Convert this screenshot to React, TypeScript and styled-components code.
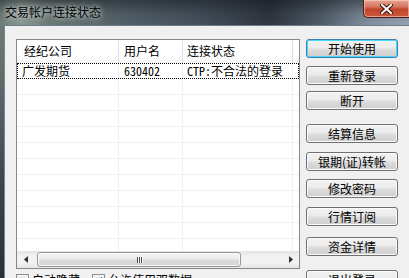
import React from "react";
import styled, { createGlobalStyle } from "styled-components";

const GlobalStyle = createGlobalStyle`
  html, body {
    margin: 0;
    padding: 0;
    width: 409px;
    height: 278px;
    overflow: hidden;
    background: #f0f0f0;
  }
`;

const UI_FONT = `"Noto Sans CJK SC", "Noto Sans", sans-serif`;
const LIST_FONT = `"Noto Sans Mono CJK SC", "Noto Sans CJK SC", "Liberation Mono", monospace`;

const Window = styled.div`
    width: 409px;
    height: 278px;
    display: flex;
    flex-direction: column;
    overflow: hidden;
    font-family: ${UI_FONT};
    font-size: 12px;
    color: #000;
`;

const TitleBar = styled.div`
    height: 25px;
    flex: none;
    display: flex;
    align-items: flex-start;
    background:
      linear-gradient(180deg, rgba(10, 14, 18, 0.45) 0%, rgba(10, 14, 18, 0.1) 55%, rgba(0, 0, 0, 0) 100%),
      linear-gradient(90deg, #6f7e79 0%, #8a9993 5%, #65736f 14%, #52606a 32%, #434e5a 50%, #2f3640 66%, #4f5b68 78%, #8290a0 90%, #94a2b2 100%);
`;

const Title = styled.span`
    margin: 4px 0 0 5px;
    font-size: 12px;
    line-height: 16px;
    color: #000;
    text-shadow:
      0 0 4px rgba(230, 236, 240, 0.9),
      0 0 8px rgba(220, 228, 232, 0.7);
`;

const CloseButton = styled.div`
    margin-left: auto;
    width: 46px;
    height: 18px;
    box-sizing: border-box;
    border: 1px solid #4a1a14;
    border-top: none;
    border-right: none;
    border-radius: 0 0 0 5px;
    display: flex;
    align-items: center;
    justify-content: center;
    background: linear-gradient(180deg, #e9a493 0%, #d5765f 40%, #c2442b 55%, #c85a3c 100%);
    box-shadow: inset 0 0 0 1px rgba(255, 220, 210, 0.55);
`;

const Body = styled.div`
    flex: 1;
    display: flex;
    min-height: 0;
`;

const SideFrame = styled.div`
    width: 4px;
    flex: none;
    background: linear-gradient(180deg, #6e7a78 0%, #5a6466 30%, #3f474c 60%, #2b3034 100%);
`;

const Client = styled.div`
    flex: 1;
    display: flex;
    align-items: flex-start;
    gap: 6px;
    padding: 13px 0 0 11px;
    background: #f0f0f0;
    border-top: 1px solid #6f7a86;
    border-left: 1px solid #7c8690;
    min-height: 0;
    overflow: hidden;
`;

const LeftColumn = styled.div`
    display: flex;
    flex-direction: column;
    gap: 4px;
    flex: none;
`;

const ListBox = styled.div`
    width: 284px;
    height: 230px;
    flex: none;
    box-sizing: border-box;
    border: 1px solid #828790;
    background: #fff;
    display: flex;
    flex-direction: column;
    overflow: hidden;
    font-family: ${LIST_FONT};
`;

const HeaderRow = styled.div`
    height: 23px;
    flex: none;
    display: flex;
    background: linear-gradient(180deg, #ffffff 0%, #ffffff 60%, #f4f5f7 100%);
    font-family: ${UI_FONT};
`;

const HeaderCell = styled.div<{ $w?: number; $pad: number; $last?: boolean }>`
    ${(p) => (p.$w ? `width: ${p.$w}px; flex: none;` : "flex: 1;")}
    box-sizing: border-box;
    padding-left: ${(p) => p.$pad}px;
    border-right: ${(p) => (p.$last ? "none" : "1px solid #dcdfe3")};
    line-height: 22px;
    white-space: nowrap;
`;

const Rows = styled.div`
    flex: 1;
    overflow: hidden;
`;

const Row = styled.div<{ $focused?: boolean }>`
    height: 16px;
    display: flex;
    outline: ${(p) => (p.$focused ? "1px dotted #000" : "none")};
    outline-offset: -1px;
`;

const Cell = styled.div<{ $w?: number; $pad: number; $last?: boolean }>`
    ${(p) => (p.$w ? `width: ${p.$w}px; flex: none;` : "flex: 1;")}
    box-sizing: border-box;
    padding-left: ${(p) => p.$pad}px;
    border-right: ${(p) => (p.$last ? "none" : "1px solid #f0f0f0")};
    border-bottom: 1px solid #f0f0f0;
    font-size: 12px;
    line-height: 16px;
    white-space: nowrap;
    overflow: hidden;
`;

const HScroll = styled.div`
    height: 17px;
    flex: none;
    display: flex;
    align-items: stretch;
    background: linear-gradient(180deg, #e3e3e3 0%, #f2f2f2 30%, #f2f2f2 70%, #e6e6e6 100%);
`;

const ScrollArrow = styled.div`
    width: 17px;
    flex: none;
    display: flex;
    align-items: center;
    justify-content: center;
`;

const Track = styled.div`
    flex: 1;
    display: flex;
    align-items: stretch;
    padding: 1px 0;
`;

const Thumb = styled.div`
    width: 204px;
    margin-left: 3px;
    box-sizing: border-box;
    border: 1px solid #979797;
    border-radius: 3px;
    background: linear-gradient(180deg, #f4f4f4 0%, #ececec 45%, #dcdcdc 55%, #d2d2d2 100%);
    box-shadow: inset 0 0 0 1px rgba(255, 255, 255, 0.8);
    display: flex;
    align-items: center;
    justify-content: center;
    gap: 1px;
`;

const Grip = styled.span`
    width: 1px;
    height: 6px;
    background: #4a4a4a;
    box-shadow: 1px 0 0 #fff;
`;

const CheckRow = styled.div`
    display: flex;
    align-items: center;
    gap: 3px;
    height: 14px;
    flex: none;
`;

const Check = styled.span<{ $spaced?: boolean }>`
    width: 13px;
    height: 13px;
    flex: none;
    box-sizing: border-box;
    border: 1px solid #8e8f8f;
    background: linear-gradient(135deg, #dcdcdc 0%, #f6f6f6 100%);
    box-shadow: inset 0 0 0 2px #f4f4f4;
    margin-left: ${(p) => (p.$spaced ? "9px" : "0")};
    display: flex;
    align-items: center;
    justify-content: center;
`;

const CheckLabel = styled.span`
    line-height: 14px;
    white-space: nowrap;
`;

const ButtonColumn = styled.div`
    display: flex;
    flex-direction: column;
    flex: none;
`;

const Button = styled.div<{ $gap: number; $default?: boolean }>`
    width: 92px;
    height: 19px;
    margin-top: ${(p) => p.$gap}px;
    box-sizing: border-box;
    border: 1px solid ${(p) => (p.$default ? "#3c7fb1" : "#707070")};
    border-radius: 3px;
    background: linear-gradient(180deg, #f2f2f2 0%, #ebebeb 48%, #dddddd 52%, #cfcfcf 100%);
    box-shadow: inset 0 0 0 1px ${(p) => (p.$default ? "#48d8fb" : "#fbfbfb")};
    display: flex;
    align-items: center;
    justify-content: center;
    font-size: 12px;
    line-height: 17px;
    flex: none;
`;

const columns = [
    { w: 102, head: "经纪公司", headPad: 7, pad: 5 },
    { w: 64, head: "用户名", headPad: 5, pad: 5 },
    { w: 110, head: "连接状态", headPad: 4, pad: 4 },
];

const data = [["广发期货", "630402", "CTP:不合法的登录"]];

const buttons = [
    { text: "开始使用", gap: 0, def: true },
    { text: "重新登录", gap: 8 },
    { text: "断开", gap: 6 },
    { text: "结算信息", gap: 14 },
    { text: "银期(证)转帐", gap: 9 },
    { text: "修改密码", gap: 8 },
    { text: "行情订阅", gap: 9 },
    { text: "资金详情", gap: 11 },
    { text: "退出登录", gap: 14 },
];

function CloseGlyph() {
    return (
        <svg width="13" height="10" viewBox="0 0 13 10">
            <path d="M2 1 L11 9 M11 1 L2 9" stroke="#3a1410" strokeWidth="4" strokeLinecap="square" />
            <path d="M2 1 L11 9 M11 1 L2 9" stroke="#ffffff" strokeWidth="2" strokeLinecap="square" />
        </svg>
    );
}

function Arrow({ dir }: { dir: "left" | "right" }) {
    return (
        <svg width="4" height="7" viewBox="0 0 4 7">
            {dir === "left" ? (
                <path d="M4 0 L0 3.5 L4 7 Z" fill="#333" />
            ) : (
                <path d="M0 0 L4 3.5 L0 7 Z" fill="#333" />
            )}
        </svg>
    );
}

export default function App() {
    const rows = Array.from({ length: 12 }, (_, i) => data[i] || ["", "", ""]);

    return (
        <Window>
            <GlobalStyle />
            <TitleBar>
                <Title>交易帐户连接状态</Title>
                <CloseButton>
                    <CloseGlyph />
                </CloseButton>
            </TitleBar>
            <Body>
                <SideFrame />
                <Client>
                    <LeftColumn>
                        <ListBox>
                            <HeaderRow>
                                {columns.map((c) => (
                                    <HeaderCell key={c.head} $w={c.w} $pad={c.headPad}>
                                        {c.head}
                                    </HeaderCell>
                                ))}
                                <HeaderCell $pad={0} $last />
                            </HeaderRow>
                            <Rows>
                                {rows.map((r, i) => (
                                    <Row key={i} $focused={i === 0}>
                                        {columns.map((c, j) => (
                                            <Cell key={j} $w={c.w} $pad={c.pad}>
                                                {r[j]}
                                            </Cell>
                                        ))}
                                        <Cell $pad={0} $last />
                                    </Row>
                                ))}
                            </Rows>
                            <HScroll>
                                <ScrollArrow>
                                    <Arrow dir="left" />
                                </ScrollArrow>
                                <Track>
                                    <Thumb>
                                        <Grip />
                                        <Grip />
                                        <Grip />
                                    </Thumb>
                                </Track>
                                <ScrollArrow>
                                    <Arrow dir="right" />
                                </ScrollArrow>
                            </HScroll>
                        </ListBox>
                        <CheckRow>
                            <Check />
                            <CheckLabel>自动隐藏</CheckLabel>
                            <Check $spaced>
                                <svg width="9" height="9" viewBox="0 0 9 9">
                                    <path d="M1 4.5 L3.5 7 L8 1.5" stroke="#2a4a7a" strokeWidth="1.6" fill="none" />
                                </svg>
                            </Check>
                            <CheckLabel>允许使用双数据</CheckLabel>
                        </CheckRow>
                    </LeftColumn>
                    <ButtonColumn>
                        {buttons.map((b) => (
                            <Button key={b.text} $gap={b.gap} $default={b.def}>
                                {b.text}
                            </Button>
                        ))}
                    </ButtonColumn>
                </Client>
            </Body>
        </Window>
    );
}
